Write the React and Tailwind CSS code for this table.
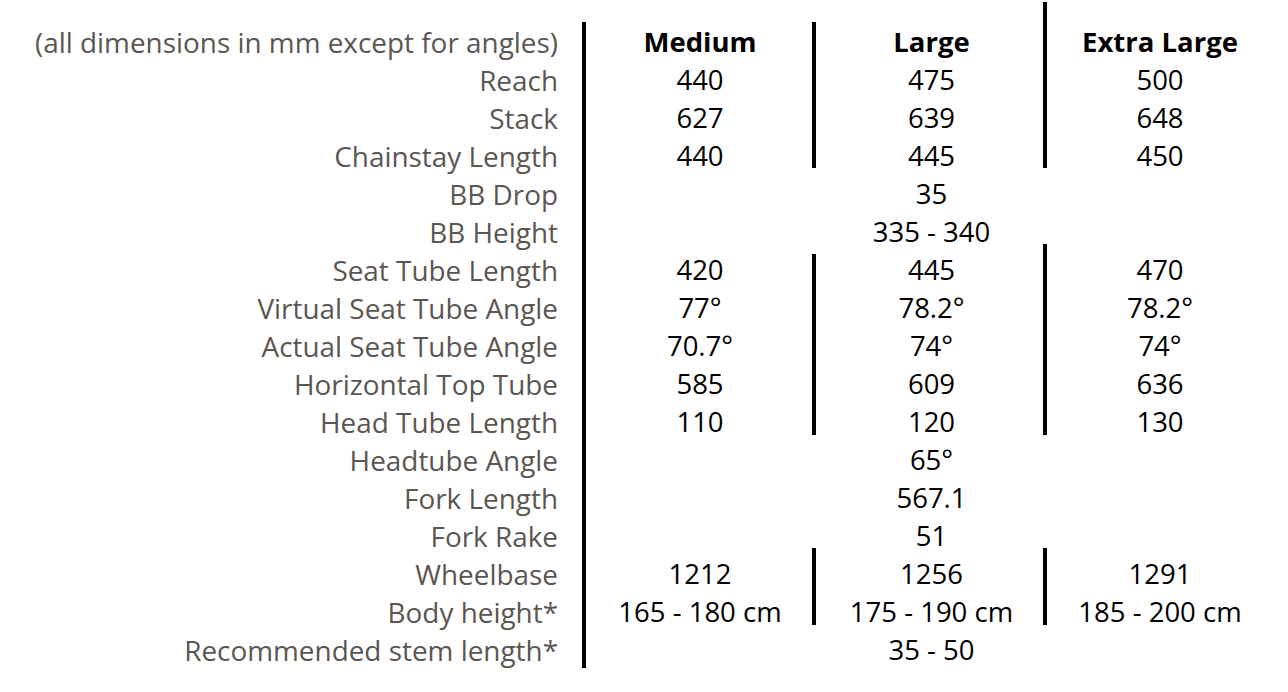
const ROW = [
  'row-start-1', 'row-start-2', 'row-start-3', 'row-start-4', 'row-start-5', 'row-start-6',
  'row-start-7', 'row-start-8', 'row-start-9', 'row-start-10', 'row-start-11', 'row-start-12',
  'row-start-13', 'row-start-14', 'row-start-15', 'row-start-16', 'row-start-17',
]

const GEOMETRY = [
  { label: '(all dimensions in mm except for angles)', values: ['Medium', 'Large', 'Extra Large'], head: true },
  { label: 'Reach', values: ['440', '475', '500'] },
  { label: 'Stack', values: ['627', '639', '648'] },
  { label: 'Chainstay Length', values: ['440', '445', '450'] },
  { label: 'BB Drop', values: ['35'] },
  { label: 'BB Height', values: ['335 - 340'] },
  { label: 'Seat Tube Length', values: ['420', '445', '470'] },
  { label: 'Virtual Seat Tube Angle', values: ['77°', '78.2°', '78.2°'] },
  { label: 'Actual Seat Tube Angle', values: ['70.7°', '74°', '74°'] },
  { label: 'Horizontal Top Tube', values: ['585', '609', '636'] },
  { label: 'Head Tube Length', values: ['110', '120', '130'] },
  { label: 'Headtube Angle', values: ['65°'] },
  { label: 'Fork Length', values: ['567.1'] },
  { label: 'Fork Rake', values: ['51'] },
  { label: 'Wheelbase', values: ['1212', '1256', '1291'] },
  { label: 'Body height*', values: ['165 - 180 cm', '175 - 190 cm', '185 - 200 cm'] },
  { label: 'Recommended stem length*', values: ['35 - 50'] },
]

// per-size column placement (Large sits a touch right of centre in the source)
const COL = ['col-start-2 pl-[6px]', 'col-start-3 pl-[8px]', 'col-start-4 pl-[4px]']

export default function App() {
  return (
    <div className="w-[1288px] h-[692px] bg-white overflow-hidden font-['Open_Sans',sans-serif] text-[27.5px] leading-[38px]">
      <div className="grid grid-cols-[582px_230px_231px_230px] grid-rows-[repeat(17,38px)] pt-[23px]">
        {/* divider lines */}
        <span className="col-start-2 row-start-1 row-end-18 w-[4px] bg-black -mt-px mb-px" />
        <span className="col-start-3 row-start-1 row-end-5 w-[4px] bg-black -mt-px mb-[7px]" />
        <span className="col-start-3 row-start-7 row-end-12 w-[4px] bg-black mt-[3px] mb-[6px]" />
        <span className="col-start-3 row-start-15 row-end-17 w-[4px] bg-black -mt-[7px] mb-[6px]" />
        <span className="col-start-4 row-start-1 row-end-5 w-[4px] bg-black -mt-[21px] mb-[7px]" />
        <span className="col-start-4 row-start-7 row-end-12 w-[4px] bg-black -mt-[7px] mb-[6px]" />
        <span className="col-start-4 row-start-15 row-end-17 w-[4px] bg-black -mt-[7px] mb-[6px]" />

        {GEOMETRY.map((r, i) => (
          <div key={r.label} className="contents">
            <div className={`${ROW[i]} col-start-1 pr-[24px] text-right text-[27.9px] text-[#5b5651] whitespace-nowrap`}>
              {r.label}
            </div>
            {r.values.length === 1 ? (
              <div className={`${ROW[i]} col-start-2 col-end-5 pl-[8px] text-center text-black whitespace-nowrap`}>
                {r.values[0]}
              </div>
            ) : (
              r.values.map((v, j) => (
                <div
                  key={j}
                  className={`${ROW[i]} ${COL[j]} text-center text-black whitespace-nowrap ${r.head ? 'font-bold' : ''}`}
                >
                  {v}
                </div>
              ))
            )}
          </div>
        ))}
      </div>
    </div>
  )
}
